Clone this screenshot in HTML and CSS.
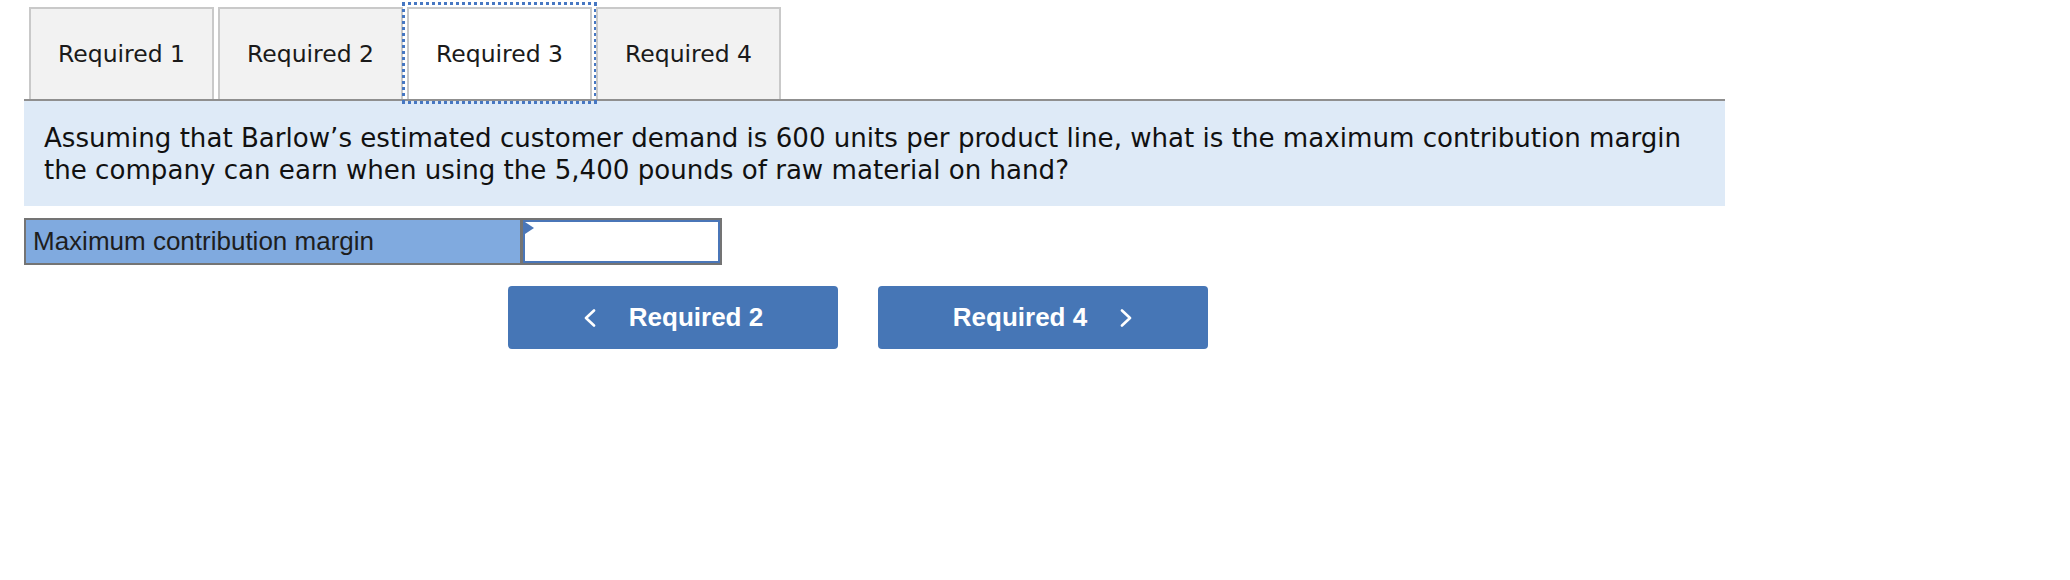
FILE: index.html
```html
<!DOCTYPE html>
<html lang="en">
<head>
<meta charset="utf-8">
<title>Required 3</title>
<link rel="stylesheet" href="styles.css">
</head>
<body>
<div class="page">
  <div class="tabs">
    <div class="tab">Required 1</div>
    <div class="tab">Required 2</div>
    <div class="tab active">Required 3</div>
    <div class="tab">Required 4</div>
  </div>
  <div class="question">Assuming that Barlow’s estimated customer demand is 600 units per product line, what is the maximum contribution margin the company can earn when using the 5,400 pounds of raw material on hand?</div>
  <div class="answer">
    <div class="label">Maximum contribution margin</div>
    <div class="input"><span class="marker"></span></div>
  </div>
  <div class="nav">
    <div class="btn">
      <svg class="chev" width="14" height="18" viewBox="0 0 14 18"><polyline points="11,1.5 3,9 11,16.5" fill="none" stroke="#fff" stroke-width="2.6" stroke-linecap="round" stroke-linejoin="round"/></svg>
      <span>Required 2</span>
    </div>
    <div class="btn">
      <span>Required 4</span>
      <svg class="chev" width="14" height="18" viewBox="0 0 14 18"><polyline points="3,1.5 11,9 3,16.5" fill="none" stroke="#fff" stroke-width="2.6" stroke-linecap="round" stroke-linejoin="round"/></svg>
    </div>
  </div>
</div>
</body>
</html>
```
FILE: styles.css
```css
html, body {
  margin: 0;
  padding: 0;
  background: #ffffff;
}

.page {
  width: 1701px;
  margin-left: 24px;
  font-family: "DejaVu Sans", Verdana, sans-serif;
}

.tabs {
  display: flex;
  gap: 4px;
  padding: 7px 0 0 5px;
  border-bottom: 2px solid #8f8f8f;
}

.tab {
  width: 185px;
  height: 92px;
  box-sizing: border-box;
  border: 2px solid #c9c9c9;
  border-bottom: none;
  background: #f2f2f2;
  display: flex;
  align-items: center;
  justify-content: center;
  font-size: 23.5px;
  color: #1a1a1a;
}

.tab.active {
  background: #ffffff;
  outline: 3px dotted #4677c2;
  outline-offset: 2px;
}

.question {
  background: #deeaf7;
  padding: 21px 16px 20px 20px;
  font-size: 26.1px;
  line-height: 32px;
  color: #111111;
}

.answer {
  display: flex;
  width: fit-content;
  margin-top: 12px;
  border: 2px solid #747474;
  height: 43px;
}

.label {
  width: 497px;
  box-sizing: border-box;
  background: #80aadf;
  border-right: 3px solid #747474;
  padding-left: 7px;
  font-family: "Liberation Sans", Arial, sans-serif;
  font-size: 26px;
  line-height: 43px;
  color: #1e1e1e;
}

.input {
  position: relative;
  width: 197px;
  box-sizing: border-box;
  border: 2px solid #4a76b8;
  background: #ffffff;
}

.marker {
  position: absolute;
  left: 0;
  top: 0;
  width: 0;
  height: 0;
  border-top: 6px solid transparent;
  border-bottom: 6px solid transparent;
  border-left: 9px solid #4a76b8;
}

.nav {
  display: flex;
  gap: 40px;
  margin: 21px 0 0 484px;
}

.btn {
  width: 330px;
  height: 63px;
  background: #4676b6;
  border-radius: 4px;
  display: flex;
  align-items: center;
  justify-content: center;
  gap: 32px;
  color: #ffffff;
  font-family: "Liberation Sans", Arial, sans-serif;
  font-weight: bold;
  font-size: 26px;
}

.chev {
  display: block;
}
```
